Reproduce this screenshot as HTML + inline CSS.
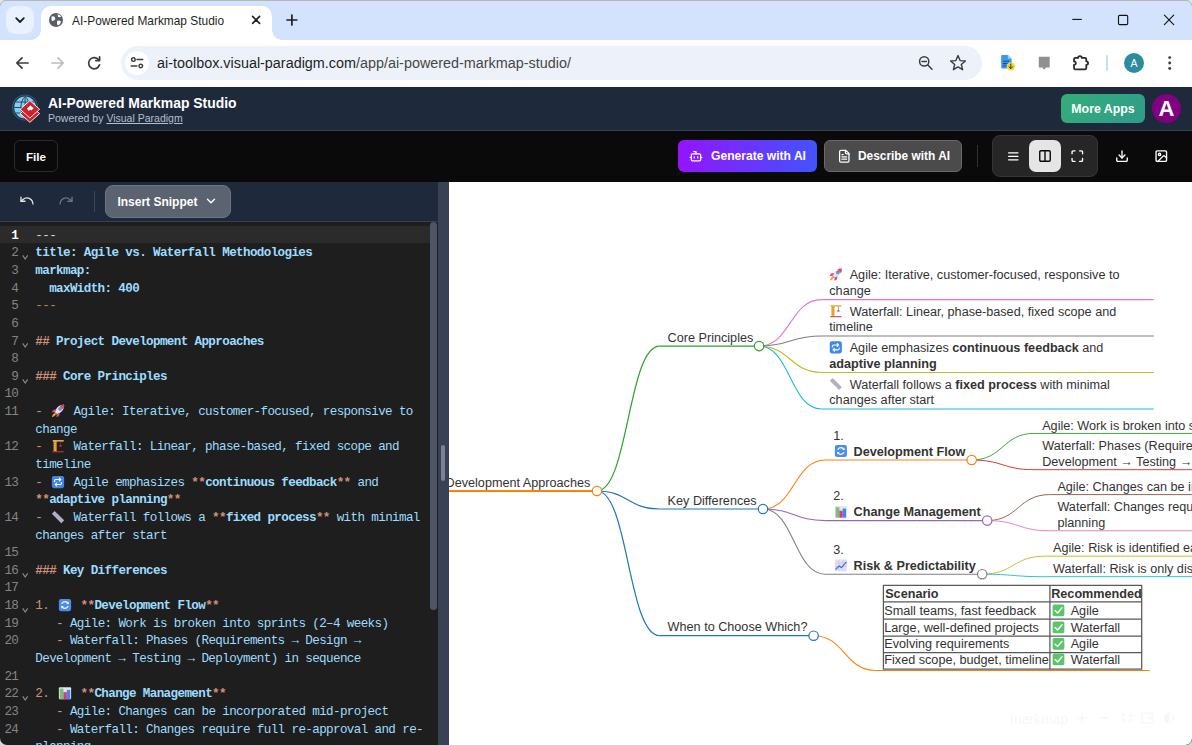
<!DOCTYPE html>
<html lang="en">
<head>
<meta charset="utf-8">
<title>AI-Powered Markmap Studio</title>
<style>
*{box-sizing:border-box;margin:0;padding:0}
html,body{width:1192px;height:745px;overflow:hidden;background:#fff;font-family:"Liberation Sans",sans-serif}
.abs{position:absolute}
svg{display:block;overflow:visible}
#root{position:relative;width:1192px;height:745px;overflow:hidden}
/* ---------- browser chrome ---------- */
#tabstrip{left:0;top:0;width:1192px;height:40px;background:#d3e3fd}
#tabdrop{left:6px;top:6px;width:28px;height:28px;border-radius:9px;background:#e9f0fe}
#tab{left:41px;top:6px;width:231px;height:34px;background:#fff;border-radius:10px 10px 0 0}
#tab:before,#tab:after{content:"";position:absolute;bottom:0;width:10px;height:10px}
#tab:before{left:-10px;background:radial-gradient(circle at 0 0,transparent 9.5px,#fff 10px)}
#tab:after{right:-10px;background:radial-gradient(circle at 100% 0,transparent 9.5px,#fff 10px)}
#tabtitle{left:72px;top:14px;font-size:11.9px;color:#1f1f1f;white-space:nowrap}
#navbar{left:0;top:40px;width:1192px;height:47px;background:#fff;border-radius:8px 8px 0 0}
#omni{left:120.5px;top:46px;width:861.5px;height:34px;border-radius:17px;background:#edf2fa}
#omniicon{left:124.8px;top:51px;width:24px;height:24px;border-radius:12px;background:#fff}
#url{left:157px;top:55px;font-size:14.38px;color:#1f1f1f;white-space:nowrap}
#url span{color:#474747}
#chromeav{left:1124px;top:53px;width:20px;height:20px;border-radius:50%;background:#2b8c9e;color:#fff;font-size:10.5px;text-align:center;line-height:20px}
/* ---------- app ---------- */
#apphead{left:0;top:87px;width:1192px;height:44px;background:#1e293b;border-bottom:1px solid #334155}
#apptitle{left:48px;top:95px;font-size:13.92px;font-weight:bold;color:#fff;white-space:nowrap}
#appsub{left:48px;top:111.8px;font-size:10.5px;color:#b6bfcd;white-space:nowrap}
#moreapps{left:1061px;top:94px;width:84px;height:29px;border-radius:6px;background:linear-gradient(135deg,#35ad78,#2e9c8b);color:#fff;font-weight:bold;font-size:12.35px;text-align:center;line-height:30px}
#avatar{left:1152px;top:94px;width:29px;height:29px;border-radius:50%;background:#800080;color:#fff;font-weight:bold;font-size:22px;text-align:center;line-height:29px}
#toolbar{left:0;top:131px;width:1192px;height:51px;background:#0a0a0a}
.btn{position:absolute;border-radius:6px;color:#fff;font-weight:bold;font-size:12.1px;white-space:nowrap}
#filebtn{left:14px;top:140px;width:44px;height:32px;border:1px solid #2a2a2a;text-align:center;line-height:31px;background:#0a0a0a;font-size:11.6px}
#genbtn{left:678px;top:140px;width:139px;height:32px;background:linear-gradient(90deg,#9414fc,#4353ff);line-height:33.400px;padding-left:33px}
#descbtn{left:824px;top:140px;width:138px;height:32px;background:#4b4b4b;border:1px solid #6a6a6a;line-height:31.400px;padding-left:33px;font-size:11.900px}
#tsep{left:977px;top:145px;width:1px;height:22px;background:#333}
#vgroup{left:992px;top:135px;width:106px;height:42px;border-radius:8px;background:#262626;border:1px solid #363636}
#vsel{left:1029px;top:140px;width:32px;height:32px;border-radius:7px;background:#e5e5e5}
#edbar{left:0;top:182px;width:438px;height:40px;background:#1e293b;border-bottom:1px solid #334155}
#edsep{left:94px;top:191px;width:1px;height:21px;background:#3b4659}
#snippet{left:105px;top:185px;width:126px;height:33px;background:#5b6270;border:1px solid #6f7683;line-height:32.4px;padding-left:11.4px;font-size:12px;border-radius:8px}
#editor{left:0;top:222px;width:438px;height:523px;background:#1e1e1e;overflow:hidden;font-family:"Liberation Mono",monospace;font-size:12.6px;letter-spacing:-0.635px;color:#9cdcfe}
#curline{left:0;top:4px;width:430px;height:17px;background:#2b2b2b}
#thumb{left:430px;top:0;width:7px;height:388px;border-radius:3.500px;background:#4d5566}
.row{position:absolute;left:35.3px;height:17.632px;line-height:17.632px;white-space:pre}
.ln{position:absolute;left:0;width:18.3px;text-align:right;height:17.632px;line-height:17.632px;color:#858585;font-size:12.6px}
.ln.act{color:#fff;font-weight:bold}
.fold{position:absolute;left:22.4px;width:6.4px;height:4.6px}
.o{color:#ce9178}
.s{color:#ce9178;font-weight:bold}
.d{color:#d4d4d4}
.do{color:#b5815f}
b{font-weight:bold}
.em{display:inline-block;width:17.5px;height:14px;vertical-align:-2.8px;letter-spacing:0;padding-left:1.6px}
#gutter{left:438px;top:182px;width:11px;height:563px;background:#394154}
#ghandle{left:441px;top:445px;width:4px;height:36px;border-radius:2px;background:#7a8294}
#map{left:449px;top:182px;width:743px;height:563px;background:#fff;overflow:hidden}
</style>
</head>
<body>
<div id="root">
<svg width="0" height="0" style="position:absolute"><defs>
<symbol id="e-rocket" viewBox="0 0 16 16"><path d="M15 1c-4.200-.300-7.400 1.800-9.600 5.600L4.200 9l2.800 2.800 2.400-1.200C13.200 8.400 15.300 5.200 15 1z" fill="#dfe3ee"/><path d="M15 1c-2-.100-3.700.300-5.200 1.200l4 4C14.700 4.700 15.100 3 15 1z" fill="#e8436d"/><circle cx="10.400" cy="5.600" r="1.700" fill="#5aa7e6" stroke="#3b6ea8" stroke-width=".6"/><path d="M6 6 2.400 6.800.800 9.800l3.800-.600zM10 10l-.800 3.600-3 1.600.600-3.800z" fill="#e8436d"/><path d="M4.800 10.200C3 10.600 1.600 12.200 1 15c2.800-.600 4.400-2 4.800-3.800z" fill="#f5a623"/><path d="M4.200 9l2.800 2.800-1 .400-2.200-2.200z" fill="#8b93a7"/></symbol>
<symbol id="e-crane" viewBox="0 0 16 16"><rect x="3" y="2" width="3.400" height="12" fill="#f2b13c"/><path d="M3 4h3.400M3 6.500h3.400M3 9h3.400M3 11.500h3.400" stroke="#b9791c" stroke-width=".7"/><rect x="2" y="1.200" width="12.500" height="1.800" fill="#f2b13c"/><path d="M11 3v3" stroke="#555" stroke-width=".7"/><path d="M9.200 8.600 11 6l1.800 2.600z" fill="#d4323c"/><rect x="1.500" y="14" width="13" height="1.200" fill="#d4323c"/></symbol>
<symbol id="e-repeat" viewBox="0 0 16 16"><rect x="1" y="1" width="14" height="14" rx="2.400" fill="#3f86f0"/><path d="M4 7.400V6.800a1.600 1.600 0 0 1 1.600-1.600h5.200M9.600 3.600l1.600 1.600-1.600 1.600M12 8.600v.6a1.600 1.600 0 0 1-1.600 1.600H5.200M6.400 12.400 4.800 10.800l1.600-1.600" fill="none" stroke="#fff" stroke-width="1.300" stroke-linecap="round" stroke-linejoin="round"/></symbol>
<symbol id="e-ruler" viewBox="0 0 16 16"><path d="M4.200 1 15 11.800 11.800 15 1 4.200z" fill="#b7b1c7"/><path d="M5.400 4.600l1.200-1.200M7.200 6.400l1.200-1.200M9 8.200l1.200-1.200M10.800 10l1.200-1.200M12.600 11.800l1.200-1.200" stroke="#8d86a3" stroke-width=".7"/></symbol>
<symbol id="e-refresh" viewBox="0 0 16 16"><rect x="1" y="1" width="14" height="14" rx="2.400" fill="#4a8df2"/><path d="M11.400 6.400A3.800 3.800 0 0 0 4.600 6.200M4.600 9.600a3.800 3.800 0 0 0 6.800.2" fill="none" stroke="#fff" stroke-width="1.400" stroke-linecap="round"/><path d="M12.200 4v2.800H9.400zM3.800 12V9.200h2.800z" fill="#fff"/></symbol>
<symbol id="e-bars" viewBox="0 0 16 16"><rect x="1" y="1.500" width="14" height="13.500" rx="1" fill="#e4e4ea"/><rect x="2" y="3" width="4.200" height="12" fill="#74c46e"/><rect x="6.200" y="7" width="3.900" height="8" fill="#e0367a"/><rect x="10.100" y="4.500" width="3.900" height="10.500" fill="#3f86f0"/></symbol>
<symbol id="e-trend" viewBox="0 0 16 16"><rect x="1" y="1.500" width="14" height="13.500" rx="1" fill="#e3def0"/><path d="M1 5.500h14M1 9.500h14M5.500 1.500v13.500M10.500 1.500v13.500" stroke="#cbc2e4" stroke-width=".7"/><path d="M1.800 13 6 8.800 8.600 10.800 14.400 4.200" fill="none" stroke="#3c78d8" stroke-width="1.500" stroke-linejoin="round"/></symbol>
<symbol id="e-check" viewBox="0 0 16 16"><rect x="1" y="1" width="14" height="14" rx="2" fill="#5cc46a"/><path d="M4 8.300 6.900 11.200 12.200 5" fill="none" stroke="#fff" stroke-width="1.700" stroke-linecap="round" stroke-linejoin="round"/></symbol>
</defs></svg>
<!-- browser chrome -->
<div id="tabstrip" class="abs"></div>
<div id="tabdrop" class="abs"></div>
<div id="tab" class="abs"></div>
<div class="abs" style="left:0;top:0;width:1192px;height:1px;background:#b9b7b4"></div>
<svg class="abs" style="left:0;top:0" width="6" height="6" viewBox="0 0 6 6"><path d="M0 0 H6 A6 6 0 0 0 0 6 Z" fill="#e6e6e6"/><path d="M0 6 A6 6 0 0 1 6 0.500" fill="none" stroke="#b9b7b4" stroke-width="1"/></svg>
<svg class="abs" style="left:1186px;top:0" width="6" height="6" viewBox="0 0 6 6"><path d="M6 0 H0 A6 6 0 0 1 6 6 Z" fill="#e6e6e6"/><path d="M6 6 A6 6 0 0 0 0 0.500" fill="none" stroke="#b9b7b4" stroke-width="1"/></svg>
<div id="tabtitle" class="abs">AI-Powered Markmap Studio</div>
<svg class="abs" style="left:0;top:0" width="1192" height="87" viewBox="0 0 1192 87" fill="none" stroke-linecap="round" stroke-linejoin="round">
  <!-- tab dropdown chevron -->
  <path d="M16.2 18.2 L20 22 L23.8 18.2" stroke="#1f1f1f" stroke-width="1.8"/>
  <!-- favicon globe -->
  <circle cx="56" cy="20" r="7" fill="#5a5e66"/>
  <path d="M51.5 16.5 q2.5 -1 3.5 1 q1 2 -1 3 q-2 1 -2.5 -0.5 z M57 21 q2.5 -1 4 0.5 q-0.5 3 -3 4 q-1.5 -1.5 -1 -4.5 z M57.5 14.2 q2.5 0.3 3.8 2.3 q-2 1.2 -3.3 0.2 z" fill="#fff" stroke="none"/>
  <!-- tab close -->
  <path d="M252.600 16.400 L259.600 23.400 M259.600 16.400 L252.600 23.400" stroke="#1f1f1f" stroke-width="1.600"/>
  <!-- new tab -->
  <path d="M287 20 H296.800 M291.900 15.100 V24.900" stroke="#1f1f1f" stroke-width="1.700"/>
  <!-- window controls -->
  <path d="M1072.300 19.400 H1081.800" stroke="#111" stroke-width="1.100" stroke-linecap="butt"/>
  <rect x="1118.500" y="15.400" width="9.200" height="9.200" rx="1.200" stroke="#111" stroke-width="1.100"/>
  <path d="M1164.400 15.200 L1173.700 24.700 M1173.700 15.200 L1164.400 24.700" stroke="#111" stroke-width="1.100"/>
  <!-- back -->
  <path d="M28 63 H17 M22 57.8 L16.8 63 L22 68.2" stroke="#3c3c3c" stroke-width="1.7"/>
  <!-- forward (disabled) -->
  <path d="M52 63 H63 M58 57.8 L63.2 63 L58 68.2" stroke="#b9bcc1" stroke-width="1.7"/>
  <!-- reload -->
  <path d="M99 60.2 A5.6 5.6 0 1 0 99.6 64.8" stroke="#3c3c3c" stroke-width="1.7"/>
  <path d="M99.6 56.8 V60.6 H95.8" stroke="#3c3c3c" stroke-width="1.7"/>
</svg>
<div id="navbar" class="abs" style="z-index:-1"></div>
<div id="omni" class="abs"></div>
<div id="omniicon" class="abs"></div>
<div id="url" class="abs">ai-toolbox.visual-paradigm.com<span>/app/ai-powered-markmap-studio/</span></div>
<svg class="abs" style="left:0;top:40px" width="1192" height="47" viewBox="0 40 1192 47" fill="none" stroke-linecap="round" stroke-linejoin="round">
  <!-- tune icon -->
  <circle cx="133.400" cy="59.600" r="1.800" stroke="#3c3c3c" stroke-width="1.400"/>
  <path d="M137 59.600 H142.600" stroke="#3c3c3c" stroke-width="1.500"/>
  <circle cx="140.800" cy="66" r="1.800" stroke="#3c3c3c" stroke-width="1.400"/>
  <path d="M131.200 66 H136.800" stroke="#3c3c3c" stroke-width="1.500"/>
  <!-- zoom-out magnifier -->
  <circle cx="924.2" cy="61.4" r="4.6" stroke="#3c3c3c" stroke-width="1.5"/>
  <path d="M927.6 64.8 L932 69.2 M922 61.4 H926.4" stroke="#3c3c3c" stroke-width="1.5"/>
  <!-- star -->
  <path d="M958 55.6 L960.1 60.6 L965.4 61 L961.3 64.5 L962.6 69.7 L958 66.9 L953.4 69.7 L954.7 64.5 L950.6 61 L955.9 60.6 Z" stroke="#3c3c3c" stroke-width="1.4"/>
  <!-- blue doc extension -->
  <path d="M1001.200 56 a1 1 0 0 1 1 -1 H1007.800 L1011.600 58.800 V67.600 a1 1 0 0 1 -1 1 H1002.200 a1 1 0 0 1 -1 -1 Z" fill="#3b97f3" stroke="none"/>
  <path d="M1007.800 55 L1011.600 58.800 H1007.800 Z" fill="#7fe0d8" stroke="none"/>
  <path d="M1003.200 61.200 H1008.600 M1003.200 63.600 H1008.600 M1003.200 66 H1006.400" stroke="#1b4f9c" stroke-width="1.100"/>
  <circle cx="1010.800" cy="66.400" r="4.200" fill="#f7d63a" stroke="none"/>
  <path d="M1010.800 63.900 V68.300 M1008.900 66.700 L1010.800 68.600 L1012.700 66.700" stroke="#2e2e14" stroke-width="1"/>
  <!-- gray speech bubble extension -->
  <path d="M1038.800 56.700 H1049.700 V67.400 H1046 L1044.200 69.800 L1042.400 67.400 H1038.800 Z" fill="#909090" stroke="none"/>
  <!-- puzzle piece -->
  <path d="M1075.400 57.900 H1078.100 a1.850 1.850 0 0 1 3.700 0 H1084.900 a1.400 1.400 0 0 1 1.400 1.400 V61.300 a1.800 1.800 0 0 1 0 3.600 V67.900 a1.400 1.400 0 0 1 -1.400 1.400 H1075.400 a1.400 1.400 0 0 1 -1.400 -1.400 V65 a1.800 1.800 0 0 0 0 -3.600 V59.300 a1.400 1.400 0 0 1 1.400 -1.400 Z" stroke="#2b2b2b" stroke-width="1.800"/>
  <!-- separator -->
  <path d="M1107 56 V70" stroke="#c5d6f7" stroke-width="1.800"/>
  <!-- three dots -->
  <circle cx="1169.7" cy="57.6" r="1.45" fill="#3c3c3c"/><circle cx="1169.7" cy="63" r="1.45" fill="#3c3c3c"/><circle cx="1169.7" cy="68.4" r="1.45" fill="#3c3c3c"/>
</svg>
<div id="chromeav" class="abs">A</div>
<!-- app header -->
<div id="apphead" class="abs"></div>
<svg class="abs" style="left:10px;top:92px" width="32" height="32" viewBox="10 92 32 32">
  <circle cx="25.100" cy="107.500" r="12.500" fill="none" stroke="#2e5f78" stroke-width="1.100"/>
  <circle cx="25.100" cy="107.500" r="10.900" fill="#80cdf5"/>
  <path d="M14.200 107.500 H36 M25.100 96.600 V118.400 M25.100 96.600 C19.500 101 19.500 114 25.100 118.400 M25.100 96.600 C30.700 101 30.700 114 25.100 118.400 M15.800 102 H34.400 M15.800 113 H34.400" fill="none" stroke="#254a60" stroke-width="1"/>
  <path d="M29.900 105 L39.600 113.600 L29.900 122.300 L20.200 113.600 Z" fill="#cc2229" stroke="#fff" stroke-width="0.900"/>
  <path d="M29.900 100.600 L39.600 109.300 L29.900 118 L20.200 109.300 Z" fill="#cc2229" stroke="#fff" stroke-width="0.900"/>
  <path d="M26.900 108.500 L30.400 105.400 L33.700 108.300 L31.300 110.500 L30.300 109.600 L28.700 111 Z" fill="#fff"/>
</svg>
<div id="apptitle" class="abs">AI-Powered Markmap Studio</div>
<div id="appsub" class="abs">Powered by <u>Visual Paradigm</u></div>
<div id="moreapps" class="abs">More Apps</div>
<div id="avatar" class="abs">A</div>
<!-- toolbar -->
<div id="toolbar" class="abs"></div>
<div id="filebtn" class="btn">File</div>
<div id="genbtn" class="btn">Generate with AI</div>
<div id="descbtn" class="btn">Describe with AI</div>
<div id="tsep" class="abs"></div>
<div id="vgroup" class="abs"></div>
<div id="vsel" class="abs"></div>
<svg class="abs" style="left:670px;top:132px" width="522" height="50" viewBox="670 132 522 50" fill="none" stroke="#fff" stroke-width="1.35" stroke-linecap="round" stroke-linejoin="round">
  <!-- bot icon (generate) -->
  <g transform="translate(689 149.200) scale(0.5833)" stroke-width="2.200"><path d="M12 8V4H8"/><rect width="16" height="12" x="4" y="8" rx="2"/><path d="M2 14h2"/><path d="M20 14h2"/><path d="M15 13v2"/><path d="M9 13v2"/></g>
  <!-- file-text icon (describe) -->
  <g transform="translate(837.300 149.300) scale(0.5833)" stroke-width="2.200"><path d="M15 2H6a2 2 0 0 0-2 2v16a2 2 0 0 0 2 2h12a2 2 0 0 0 2-2V7Z"/><path d="M14 2v4a2 2 0 0 0 2 2h4"/><path d="M10 9H8"/><path d="M16 13H8"/><path d="M16 17H8"/></g>
  <!-- list -->
  <g transform="translate(1006.300 149.300) scale(0.5833)" stroke-width="2.300"><path d="M4 6h16M4 12h16M4 18h16"/></g>
  <!-- columns (selected) -->
  <g transform="translate(1038 149) scale(0.5833)" stroke="#0a0a0a" stroke-width="2.400"><rect width="18" height="18" x="3" y="3" rx="2"/><path d="M12 3v18"/></g>
  <!-- maximize -->
  <g transform="translate(1070.300 149.200) scale(0.5833)" stroke-width="2.300"><path d="M8 3H5a2 2 0 0 0-2 2v3"/><path d="M21 8V5a2 2 0 0 0-2-2h-3"/><path d="M3 16v3a2 2 0 0 0 2 2h3"/><path d="M16 21h3a2 2 0 0 0 2-2v-3"/></g>
  <!-- download -->
  <g transform="translate(1115 149.200) scale(0.5833)" stroke-width="2.300"><path d="M21 15v4a2 2 0 0 1-2 2H5a2 2 0 0 1-2-2v-4"/><path d="M7 10l5 5 5-5"/><path d="M12 15V3"/></g>
  <!-- image -->
  <g transform="translate(1154.300 149.200) scale(0.5833)" stroke-width="2.300"><rect width="18" height="18" x="3" y="3" rx="2"/><circle cx="9" cy="9" r="2"/><path d="m21 15-3.086-3.086a2 2 0 0 0-2.828 0L6 21"/></g>
</svg>
<!-- editor toolbar -->
<div id="edbar" class="abs"></div>
<div id="edsep" class="abs"></div>
<svg class="abs" style="left:0;top:182px" width="438" height="40" viewBox="0 182 438 40" fill="none" stroke="#e5e7eb" stroke-width="2" stroke-linecap="round" stroke-linejoin="round">
  <g transform="translate(19 192.6) scale(0.6667)"><path d="M3 7v6h6"/><path d="M21 17a9 9 0 0 0-9-9 9 9 0 0 0-6 2.300L3 13"/></g>
  <g transform="translate(58 192.6) scale(0.6667)" stroke="#6b7688"><path d="M21 7v6h-6"/><path d="M3 17a9 9 0 0 1 9-9 9 9 0 0 1 6 2.300l3 2.700"/></g>
</svg>
<div id="snippet" class="btn">Insert Snippet</div>
<svg class="abs" style="left:205px;top:196px" width="12" height="10" viewBox="0 0 12 10" fill="none" stroke="#fff" stroke-width="1.4" stroke-linecap="round" stroke-linejoin="round"><path d="M2.5 3.2 L6 6.7 L9.5 3.2"/></svg>
<div id="editor" class="abs">
<div id="curline" class="abs"></div>
<div class="ln act" style="top:5.80px">1</div>
<div class="row" style="top:5.80px"><span class="d">---</span></div>
<div class="ln" style="top:23.43px">2</div>
<svg class="fold" style="top:33.33px" viewBox="0 0 6.4 4.6" fill="none" stroke="#8a8a8a" stroke-width="1.15"><path d="M0.700 0.400 L3.200 4.100 L5.700 0.400"/></svg>
<div class="row" style="top:23.43px"><b>title: Agile vs. Waterfall Methodologies</b></div>
<div class="ln" style="top:41.06px">3</div>
<div class="row" style="top:41.06px"><b>markmap:</b></div>
<div class="ln" style="top:58.70px">4</div>
<div class="row" style="top:58.70px"><b>  maxWidth: 400</b></div>
<div class="ln" style="top:76.33px">5</div>
<div class="row" style="top:76.33px"><span class="do">---</span></div>
<div class="ln" style="top:93.96px">6</div>
<div class="ln" style="top:111.59px">7</div>
<svg class="fold" style="top:121.49px" viewBox="0 0 6.4 4.6" fill="none" stroke="#8a8a8a" stroke-width="1.15"><path d="M0.700 0.400 L3.200 4.100 L5.700 0.400"/></svg>
<div class="row" style="top:111.59px"><b><span class="o">##</span> Project Development Approaches</b></div>
<div class="ln" style="top:129.22px">8</div>
<div class="ln" style="top:146.86px">9</div>
<svg class="fold" style="top:156.76px" viewBox="0 0 6.4 4.6" fill="none" stroke="#8a8a8a" stroke-width="1.15"><path d="M0.700 0.400 L3.200 4.100 L5.700 0.400"/></svg>
<div class="row" style="top:146.86px"><b><span class="o">###</span> Core Principles</b></div>
<div class="ln" style="top:164.49px">10</div>
<div class="ln" style="top:182.12px">11</div>
<div class="row" style="top:182.12px"><span class="o">-</span> <span class="em"><svg width="14" height="14" viewBox="0 0 16 16"><use href="#e-rocket"/></svg></span> Agile: Iterative, customer-focused, responsive to</div>
<div class="row" style="top:199.75px">change</div>
<div class="ln" style="top:217.38px">12</div>
<div class="row" style="top:217.38px"><span class="o">-</span> <span class="em"><svg width="14" height="14" viewBox="0 0 16 16"><use href="#e-crane"/></svg></span> Waterfall: Linear, phase-based, fixed scope and</div>
<div class="row" style="top:235.02px">timeline</div>
<div class="ln" style="top:252.65px">13</div>
<div class="row" style="top:252.65px"><span class="o">-</span> <span class="em"><svg width="14" height="14" viewBox="0 0 16 16"><use href="#e-repeat"/></svg></span> Agile emphasizes <span class="s">**</span><b>continuous feedback</b><span class="s">**</span> and</div>
<div class="row" style="top:270.28px"><span class="s">**</span><b>adaptive planning</b><span class="s">**</span></div>
<div class="ln" style="top:287.91px">14</div>
<div class="row" style="top:287.91px"><span class="o">-</span> <span class="em"><svg width="14" height="14" viewBox="0 0 16 16"><use href="#e-ruler"/></svg></span> Waterfall follows a <span class="s">**</span><b>fixed process</b><span class="s">**</span> with minimal</div>
<div class="row" style="top:305.54px">changes after start</div>
<div class="ln" style="top:323.18px">15</div>
<div class="ln" style="top:340.81px">16</div>
<svg class="fold" style="top:350.71px" viewBox="0 0 6.4 4.6" fill="none" stroke="#8a8a8a" stroke-width="1.15"><path d="M0.700 0.400 L3.200 4.100 L5.700 0.400"/></svg>
<div class="row" style="top:340.81px"><b><span class="o">###</span> Key Differences</b></div>
<div class="ln" style="top:358.44px">17</div>
<div class="ln" style="top:376.07px">18</div>
<svg class="fold" style="top:385.97px" viewBox="0 0 6.4 4.6" fill="none" stroke="#8a8a8a" stroke-width="1.15"><path d="M0.700 0.400 L3.200 4.100 L5.700 0.400"/></svg>
<div class="row" style="top:376.07px"><span class="o">1.</span> <span class="em"><svg width="14" height="14" viewBox="0 0 16 16"><use href="#e-refresh"/></svg></span> <span class="s">**</span><b>Development Flow</b><span class="s">**</span></div>
<div class="ln" style="top:393.70px">19</div>
<div class="row" style="top:393.70px">   <span class="o">-</span> Agile: Work is broken into sprints (2–4 weeks)</div>
<div class="ln" style="top:411.34px">20</div>
<div class="row" style="top:411.34px">   <span class="o">-</span> Waterfall: Phases (Requirements → Design →</div>
<div class="row" style="top:428.97px">Development → Testing → Deployment) in sequence</div>
<div class="ln" style="top:446.60px">21</div>
<div class="ln" style="top:464.23px">22</div>
<svg class="fold" style="top:474.13px" viewBox="0 0 6.4 4.6" fill="none" stroke="#8a8a8a" stroke-width="1.15"><path d="M0.700 0.400 L3.200 4.100 L5.700 0.400"/></svg>
<div class="row" style="top:464.23px"><span class="o">2.</span> <span class="em"><svg width="14" height="14" viewBox="0 0 16 16"><use href="#e-bars"/></svg></span> <span class="s">**</span><b>Change Management</b><span class="s">**</span></div>
<div class="ln" style="top:481.86px">23</div>
<div class="row" style="top:481.86px">   <span class="o">-</span> Agile: Changes can be incorporated mid-project</div>
<div class="ln" style="top:499.50px">24</div>
<div class="row" style="top:499.50px">   <span class="o">-</span> Waterfall: Changes require full re-approval and re-</div>
<div class="row" style="top:517.13px">planning</div>
<div id="thumb" class="abs"></div>
</div>
<svg class="abs" style="left:0;top:738px" width="7" height="7" viewBox="0 0 7 7"><path d="M0 0 V7 H7 A7 7 0 0 1 0 0 Z" fill="#dcdcdc"/></svg>
<div id="gutter" class="abs"></div>
<div id="ghandle" class="abs"></div>
<div id="map" class="abs"><svg width="743" height="563" viewBox="449 182 743 563" font-family="'Liberation Sans',sans-serif" font-size="12.65" fill="#333">
<path d="M597.0 491.0 C628.2 491.0 628.2 346.1 659.5 346.1" fill="none" stroke="#2ca02c" stroke-width="1.2"/>
<path d="M597.0 491.0 C628.2 491.0 628.2 509.0 659.5 509.0" fill="none" stroke="#1f77b4" stroke-width="1.2"/>
<path d="M597.0 491.0 C628.2 491.0 628.2 635.7 659.5 635.7" fill="none" stroke="#1f77b4" stroke-width="1.2"/>
<path d="M759.1 346.1 C790.2 346.1 790.2 299.6 821.4 299.6" fill="none" stroke="#e377c2" stroke-width="1.05"/>
<path d="M759.1 346.1 C790.2 346.1 790.2 336.0 821.4 336.0" fill="none" stroke="#7f7f7f" stroke-width="1.05"/>
<path d="M759.1 346.1 C790.2 346.1 790.2 372.4 821.4 372.4" fill="none" stroke="#bcbd22" stroke-width="1.05"/>
<path d="M759.1 346.1 C790.2 346.1 790.2 409.0 821.4 409.0" fill="none" stroke="#17becf" stroke-width="1.05"/>
<path d="M763.0 509.0 C794.1 509.0 794.1 460.0 825.3 460.0" fill="none" stroke="#ff7f0e" stroke-width="1.05"/>
<path d="M763.0 509.0 C794.1 509.0 794.1 520.6 825.3 520.6" fill="none" stroke="#9467bd" stroke-width="1.05"/>
<path d="M763.0 509.0 C794.1 509.0 794.1 574.2 825.3 574.2" fill="none" stroke="#7f7f7f" stroke-width="1.05"/>
<path d="M971.7 460.0 C1002.9 460.0 1002.9 433.4 1034.0 433.4" fill="none" stroke="#2ca02c" stroke-width="0.92"/>
<path d="M971.7 460.0 C1002.9 460.0 1002.9 469.7 1034.0 469.7" fill="none" stroke="#d62728" stroke-width="0.92"/>
<path d="M987.2 520.6 C1018.4 520.6 1018.4 494.6 1049.5 494.6" fill="none" stroke="#8c564b" stroke-width="0.92"/>
<path d="M987.2 520.6 C1018.4 520.6 1018.4 530.8 1049.5 530.8" fill="none" stroke="#e377c2" stroke-width="0.92"/>
<path d="M982.2 574.2 C1013.4 574.2 1013.4 556.2 1044.5 556.2" fill="none" stroke="#bcbd22" stroke-width="0.92"/>
<path d="M982.2 574.2 C1013.4 574.2 1013.4 576.7 1044.5 576.7" fill="none" stroke="#17becf" stroke-width="0.92"/>
<path d="M813.6 635.7 C844.6 635.7 844.6 670.4 875.6 670.4" fill="none" stroke="#ff7f0e" stroke-width="1.05"/>
<path d="M300.0 491.0 H597.0" fill="none" stroke="#ff7f0e" stroke-width="1.9"/>
<path d="M659.5 346.1 H759.1" fill="none" stroke="#2ca02c" stroke-width="1.2"/>
<path d="M659.5 509.0 H763.0" fill="none" stroke="#1f77b4" stroke-width="1.2"/>
<path d="M659.5 635.7 H813.6" fill="none" stroke="#1f77b4" stroke-width="1.2"/>
<path d="M821.4 299.6 H1153.8" fill="none" stroke="#e377c2" stroke-width="1.05"/>
<path d="M821.4 336.0 H1153.8" fill="none" stroke="#7f7f7f" stroke-width="1.05"/>
<path d="M821.4 372.4 H1153.8" fill="none" stroke="#bcbd22" stroke-width="1.05"/>
<path d="M821.4 409.0 H1153.8" fill="none" stroke="#17becf" stroke-width="1.05"/>
<path d="M825.3 460.0 H971.7" fill="none" stroke="#ff7f0e" stroke-width="1.05"/>
<path d="M825.3 520.6 H987.2" fill="none" stroke="#9467bd" stroke-width="1.05"/>
<path d="M825.3 574.2 H982.2" fill="none" stroke="#7f7f7f" stroke-width="1.05"/>
<path d="M1034.0 433.4 H1300.0" fill="none" stroke="#2ca02c" stroke-width="0.92"/>
<path d="M1034.0 469.7 H1300.0" fill="none" stroke="#d62728" stroke-width="0.92"/>
<path d="M1049.5 494.6 H1300.0" fill="none" stroke="#8c564b" stroke-width="0.92"/>
<path d="M1049.5 530.8 H1300.0" fill="none" stroke="#e377c2" stroke-width="0.92"/>
<path d="M1044.5 556.2 H1300.0" fill="none" stroke="#bcbd22" stroke-width="0.92"/>
<path d="M1044.5 576.7 H1300.0" fill="none" stroke="#17becf" stroke-width="0.92"/>
<path d="M875.6 670.4 H1149.6" fill="none" stroke="#ff7f0e" stroke-width="1.05"/>
<path d="M883.4 585.4 H1141.7 M883.4 601.8 H1141.7 M883.4 619.2 H1141.7 M883.4 636.1 H1141.7 M883.4 652.5 H1141.7 M883.4 669.1 H1141.7 M883.4 585.4 V669.1 M1049.9 585.4 V669.1 M1141.7 585.4 V669.1" fill="none" stroke="#595959" stroke-width="1.25" stroke-linecap="square"/>
<circle cx="597.0" cy="491.0" r="4.7" fill="#fff" stroke="#ff7f0e" stroke-width="1.2"/>
<circle cx="759.1" cy="346.1" r="4.7" fill="#fff" stroke="#2ca02c" stroke-width="1.2"/>
<circle cx="763.0" cy="509.0" r="4.7" fill="#fff" stroke="#1f77b4" stroke-width="1.2"/>
<circle cx="813.6" cy="635.7" r="4.7" fill="#fff" stroke="#1f77b4" stroke-width="1.2"/>
<circle cx="971.7" cy="460.0" r="4.7" fill="#fff" stroke="#ff7f0e" stroke-width="1.2"/>
<circle cx="987.2" cy="520.6" r="4.7" fill="#fff" stroke="#9467bd" stroke-width="1.2"/>
<circle cx="982.2" cy="574.2" r="4.7" fill="#fff" stroke="#7f7f7f" stroke-width="1.2"/>
<text x="590.3" y="486.7" text-anchor="end">Project Development Approaches</text>
<text x="667.6" y="341.8">Core Principles</text>
<text x="667.6" y="504.7">Key Differences</text>
<text x="667.6" y="631.4">When to Choose Which?</text>
<use href="#e-rocket" x="828.9" y="267.7" width="13.8" height="13.8"/>
<text x="849.7" y="279.1">Agile: Iterative, customer-focused, responsive to</text>
<text x="829.3" y="295.0">change</text>
<use href="#e-crane" x="828.9" y="304.1" width="13.8" height="13.8"/>
<text x="849.7" y="315.5">Waterfall: Linear, phase-based, fixed scope and</text>
<text x="829.3" y="331.4">timeline</text>
<use href="#e-repeat" x="828.9" y="340.5" width="13.8" height="13.8"/>
<text x="849.7" y="351.9">Agile emphasizes <tspan font-weight="bold">continuous feedback</tspan> and</text>
<text x="829.3" y="367.8"><tspan font-weight="bold">adaptive planning</tspan></text>
<use href="#e-ruler" x="828.9" y="377.1" width="13.8" height="13.8"/>
<text x="849.7" y="388.5">Waterfall follows a <tspan font-weight="bold">fixed process</tspan> with minimal</text>
<text x="829.3" y="404.4">changes after start</text>
<text x="833.3" y="439.5">1.</text>
<use href="#e-refresh" x="834.0" y="444.1" width="13.8" height="13.8"/>
<text x="853.6" y="455.7"><tspan font-weight="bold">Development Flow</tspan></text>
<text x="833.3" y="500.1">2.</text>
<use href="#e-bars" x="834.0" y="504.7" width="13.8" height="13.8"/>
<text x="853.6" y="516.3"><tspan font-weight="bold">Change Management</tspan></text>
<text x="833.3" y="553.7">3.</text>
<use href="#e-trend" x="834.0" y="558.3" width="13.8" height="13.8"/>
<text x="853.6" y="569.9"><tspan font-weight="bold">Risk &amp; Predictability</tspan></text>
<text x="1042.2" y="429.5">Agile: Work is broken into sprints (2–4 weeks)</text>
<text x="1042.2" y="450.0">Waterfall: Phases (Requirements → Design →</text>
<text x="1042.2" y="465.8">Development → Testing → Deployment) in sequence</text>
<text x="1057.4" y="490.7">Agile: Changes can be incorporated mid-project</text>
<text x="1057.4" y="511.1">Waterfall: Changes require full re-approval and re-</text>
<text x="1057.4" y="526.9">planning</text>
<text x="1053.0" y="552.3">Agile: Risk is identified early and mitigated</text>
<text x="1053.0" y="572.8">Waterfall: Risk is only discovered late in testing</text>
<text x="885.2" y="597.6"><tspan font-weight="bold">Scenario</tspan></text>
<text x="1051.2" y="597.6"><tspan font-weight="bold">Recommended</tspan></text>
<text x="884.3" y="614.8">Small teams, fast feedback</text>
<use href="#e-check" x="1051.8" y="603.6" width="13.4" height="13.4"/>
<text x="1070.7" y="614.8">Agile</text>
<text x="884.3" y="631.8">Large, well-defined projects</text>
<use href="#e-check" x="1051.8" y="620.6" width="13.4" height="13.4"/>
<text x="1070.7" y="631.8">Waterfall</text>
<text x="884.3" y="648.4">Evolving requirements</text>
<use href="#e-check" x="1051.8" y="637.2" width="13.4" height="13.4"/>
<text x="1070.7" y="648.4">Agile</text>
<text x="884.3" y="663.8">Fixed scope, budget, timeline</text>
<use href="#e-check" x="1051.8" y="652.6" width="13.4" height="13.4"/>
<text x="1070.7" y="663.8">Waterfall</text>
<g opacity="0.035"><text x="1010" y="724.400" font-size="14" fill="#444">markmap</text><path d="M1077.500 718h9M1082 713.500v9M1099 718h9M1121 716h3v-3M1130 713v3h3M1133 720h-3v3M1124 723v-3h-3M1142 713h10v10h-10zM1147 718h5" fill="none" stroke="#444" stroke-width="1.600"/><path d="M1169 713a5 5 0 0 0 0 10z" fill="#444"/><circle cx="1169" cy="718" r="4.500" fill="none" stroke="#444" stroke-width="1.200"/></g>
</svg></div>
<svg class="abs" style="left:1186px;top:739px" width="6" height="6" viewBox="0 0 6 6"><path d="M6 0 V6 H0 A6 6 0 0 0 6 0 Z" fill="#d9d9d9"/><path d="M0 6 A6 6 0 0 0 6 0" fill="none" stroke="#8a8a8a" stroke-width="1"/></svg>
</div>
</body>
</html>
